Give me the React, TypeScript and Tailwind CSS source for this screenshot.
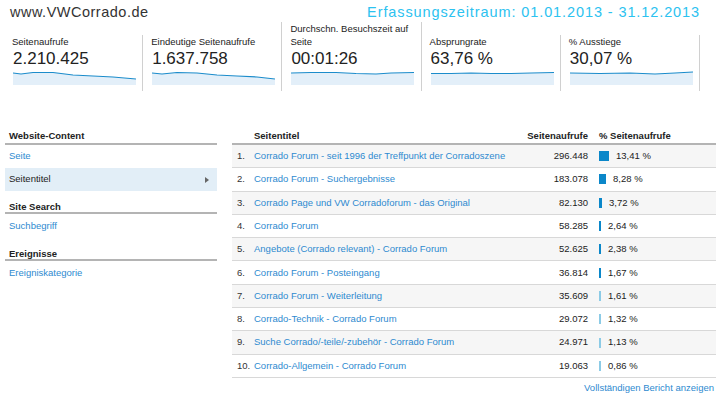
import React from 'react'

interface MetricProps {
    label: string
    value: string
    line: string
    tall?: boolean
}

interface RowProps {
    title: string
    views: string
    pct: string
    bar: number
    light: boolean
}

const metrics: MetricProps[] = [
    { label: 'Seitenaufrufe', value: '2.210.425', line: 'M0 2 L8 3 L20 1.5 L40 1.5 L60 4 L80 5 L100 6 L123 8' },
    { label: 'Eindeutige Seitenaufrufe', value: '1.637.758', line: 'M0 2 L10 3 L25 1.5 L45 2 L65 4 L85 5 L105 6 L123 8', tall: true },
    { label: 'Durchschn. Besuchszeit auf Seite', value: '00:01:26', line: 'M0 2 L20 1.5 L45 1.5 L65 2.5 L85 3 L100 2 L123 1.5' },
    { label: 'Absprungrate', value: '63,76 %', line: 'M0 2.5 L20 2.5 L40 2 L60 2.5 L80 2.5 L100 2 L123 1.5' },
    { label: '% Ausstiege', value: '30,07 %', line: 'M0 2 L30 2.5 L60 2 L85 3 L105 2 L123 1' },
]

const rows: RowProps[] = [
    { title: 'Corrado Forum - seit 1996 der Treffpunkt der Corradoszene', views: '296.448', pct: '13,41 %', bar: 10, light: false },
    { title: 'Corrado Forum - Suchergebnisse', views: '183.078', pct: '8,28 %', bar: 7, light: false },
    { title: 'Corrado Page und VW Corradoforum - das Original', views: '82.130', pct: '3,72 %', bar: 3, light: false },
    { title: 'Corrado Forum', views: '58.285', pct: '2,64 %', bar: 2, light: false },
    { title: 'Angebote (Corrado relevant) - Corrado Forum', views: '52.625', pct: '2,38 %', bar: 2, light: false },
    { title: 'Corrado Forum - Posteingang', views: '36.814', pct: '1,67 %', bar: 2, light: false },
    { title: 'Corrado Forum - Weiterleitung', views: '35.609', pct: '1,61 %', bar: 2, light: true },
    { title: 'Corrado-Technik - Corrado Forum', views: '29.072', pct: '1,32 %', bar: 2, light: true },
    { title: 'Suche Corrado/-teile/-zubehör - Corrado Forum', views: '24.971', pct: '1,13 %', bar: 2, light: true },
    { title: 'Corrado-Allgemein - Corrado Forum', views: '19.063', pct: '0,86 %', bar: 2, light: true },
]

const Spark = ({ line }: { line: string }) => (
    <svg width="123" height="14" viewBox="0 0 123 14" className="block">
        <path d={`${line} L123 14 L0 14 Z`} fill="#e3eff9" />
        <path d={line} fill="none" stroke="#1b8ccb" strokeWidth="1.2" />
    </svg>
)

const App = () => {
    return (
        <div className="w-[720px] h-[399px] bg-white overflow-hidden font-['Liberation_Sans',Arial,sans-serif] text-[#222]">
            {/* header */}
            <div className="flex justify-between items-center h-[22px] pl-[10px] pr-[20px] pt-[3px]">
                <span className="text-[14.5px] text-[#333] tracking-[0.5px]">www.VWCorrado.de</span>
                <span className="text-[14.5px] text-[#2cc2f0] tracking-[0.9px]">
                    Erfassungszeitraum: 01.01.2013 - 31.12.2013
                </span>
            </div>

            {/* metrics */}
            <div className="grid grid-cols-5 w-[696px] ml-[4px] items-end h-[69px]">
                {metrics.map((m: MetricProps, i: number) => (
                    <div
                        key={i}
                        className={`flex flex-col justify-end border-r border-[#d0d0d0] pl-[8px] pr-[7px] pb-[6px] ${m.tall ? 'self-stretch' : ''}`}
                    >
                        <div className="text-[9.5px] leading-[13px]">{m.label}</div>
                        <div className="text-[17px] leading-[22px] pl-[1px]">{m.value}</div>
                        <div className="mt-[1px] pl-[1px]">
                            <Spark line={m.line} />
                        </div>
                    </div>
                ))}
            </div>

            {/* content */}
            <div className="flex mt-[29px] pl-[5px]">
                {/* sidebar */}
                <div className="w-[212px] text-[9.5px]">
                    <div className="h-[25px] flex items-end pl-[4px] font-bold border-b-2 border-[#b4b4b4]">
                        Website-Content
                    </div>
                    <div className="h-[23px] flex items-center pl-[4px] text-[#2e8ad0]">Seite</div>
                    <div className="h-[23px] flex items-center justify-between pl-[4px] pr-[8px] bg-[#e2eef7]">
                        <span>Seitentitel</span>
                        <span className="w-0 h-0 border-y-[3px] border-y-transparent border-l-[4px] border-l-[#666]" />
                    </div>
                    <div className="h-[23px] flex items-end pl-[4px] font-bold border-b-2 border-[#b4b4b4] leading-[10px]">
                        Site Search
                    </div>
                    <div className="h-[24px] flex items-center pl-[4px] text-[#2e8ad0]">Suchbegriff</div>
                    <div className="h-[23px] flex items-end pl-[4px] font-bold border-b-2 border-[#b4b4b4] leading-[10px]">
                        Ereignisse
                    </div>
                    <div className="h-[24px] flex items-center pl-[4px] text-[#2e8ad0]">Ereigniskategorie</div>
                </div>

                {/* table */}
                <div className="ml-[15px] w-[484px] text-[9.5px]">
                    <div className="h-[25px] flex items-end font-bold border-b-2 border-[#b4b4b4]">
                        <span className="w-[22px]" />
                        <span className="flex-1">Seitentitel</span>
                        <span className="w-[80px] text-right">Seitenaufrufe</span>
                        <span className="w-[128px] pl-[11px]">% Seitenaufrufe</span>
                    </div>
                    {rows.map((r: RowProps, i: number) => (
                        <div
                            key={i}
                            className={`h-[23.3px] flex items-center border-b border-[#d8d8d8] ${i % 2 === 0 ? 'bg-[#f6f6f6]' : 'bg-white'}`}
                        >
                            <span className="w-[22px] pl-[5px] text-[#333]">{i + 1}.</span>
                            <span className="flex-1 text-[#2e8ad0] whitespace-nowrap">{r.title}</span>
                            <span className="w-[80px] text-right">{r.views}</span>
                            <span className="w-[128px] pl-[11px] flex items-center gap-[7px]">
                                <span
                                    className={`h-[10px] ${r.light ? 'bg-[#8ccbe6]' : 'bg-[#0b87c9]'}`}
                                    style={{ width: r.bar }}
                                />
                                <span>{r.pct}</span>
                            </span>
                        </div>
                    ))}
                    <div className="flex justify-end pt-[3px] pr-[2px] text-[#2e8ad0]">
                        Vollständigen Bericht anzeigen
                    </div>
                </div>
            </div>
        </div>
    )
}

export default App
